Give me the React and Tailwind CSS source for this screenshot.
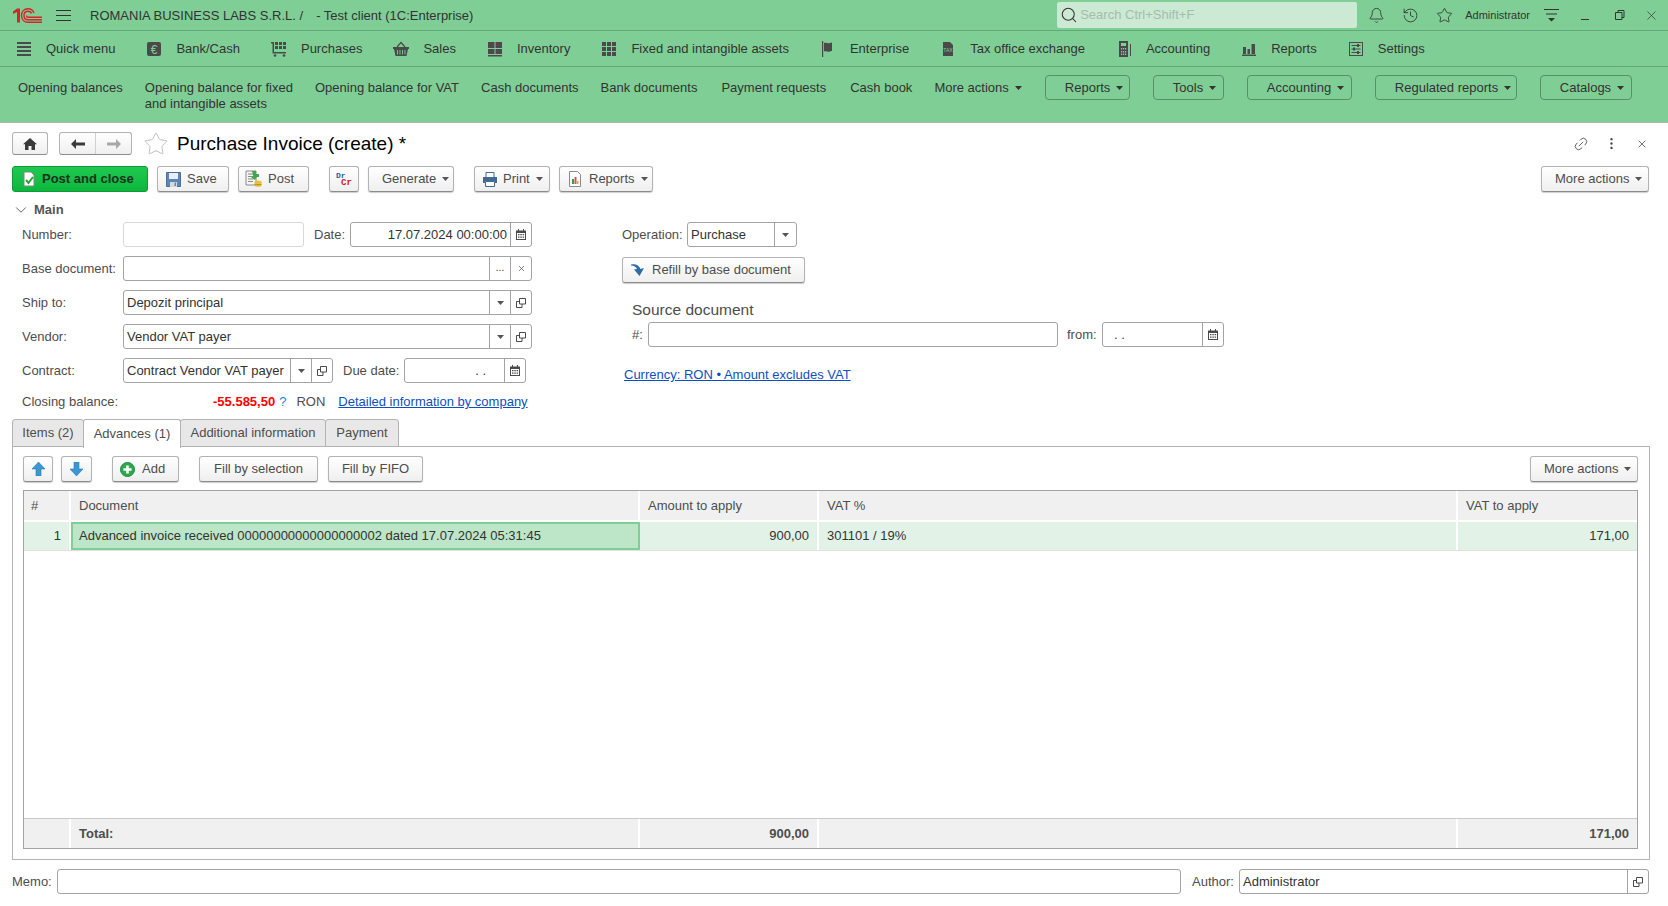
import React from "react";
import { Bell, History, Star, Search, X, Link2, MoreVertical, ChevronDown } from "lucide-react";

const Caret = ({ c = "#555" }) => (
  <svg width="7" height="4" viewBox="0 0 7 4" className="shrink-0"><path d="M0 0h7L3.5 4z" fill={c} /></svg>
);

const Logo = () => (
  <svg width="29" height="15" viewBox="0 0 29 15" fill="none" stroke="#d8232a" strokeWidth="1.4">
    <path d="M0 3.500L4 .5h3v14H4V4L0 6z" fill="#d8232a" stroke="none" />
    <path d="M21 5C20 2 17.500.7 15 .7 11 .7 8.500 3.700 8.500 7.500S11 14.300 15 14.300h14" />
    <path d="M18.500 5.500C18 4 16.500 3.300 15 3.300c-2.500 0-4 1.900-4 4.200s1.500 4.300 4 4.300h14" />
    <path d="M13.500 7.500c0 1 .7 1.800 1.700 1.800H29" />
  </svg>
);

const I = ({ children }) => (
  <svg width="16" height="16" viewBox="0 0 16 16" className="shrink-0" fill="#4a4a4a">{children}</svg>
);

const IQuick = () => <I><path d="M1 1h14v2H1zM1 5h14v2H1zM1 9h14v2H1zM1 13h14v2H1z" /></I>;
const IBank = () => (
  <I>
    <rect x="1" y="1" width="14" height="14" rx="2" />
    <text x="8" y="12.500" textAnchor="middle" fontSize="12" fill="#7fce95" fontFamily="Liberation Sans">€</text>
  </I>
);
const ICart = () => (
  <I>
    <path d="M0 1h3v10h12v1.500H1.500V2.500H0z" />
    <path d="M4 1h3v3H4zM8 1h3v3H8zM12 1h3v3h-3zM4 5h3v3H4zM8 5h3v3H8zM12 5h3v3h-3z" />
    <circle cx="4" cy="14.500" r="1.300" /><circle cx="13" cy="14.500" r="1.300" />
  </I>
);
const IBasket = () => (
  <I>
    <path d="M0 6h16v2h-1l-1.500 7h-11L1 8H0z" />
    <path d="M4 6l4-4.500L12 6" fill="none" stroke="#4a4a4a" strokeWidth="1.200" />
    <path d="M4.500 9v4.500M7 9v4.500M9.500 9v4.500M12 9v4.500" stroke="#7fce95" strokeWidth="0.900" />
  </I>
);
const IInv = () => <I><path d="M1 1h6.500v6H1zM8.500 1H15v6H8.500zM1 8h6.500v5H1zM8.500 8H15v5H8.500zM1 14h14v1.500H1z" /></I>;
const IGrid = () => <I><path d="M1 1h4v4H1zM6 1h4v4H6zM11 1h4v4h-4zM1 6h4v4H1zM6 6h4v4H6zM11 6h4v4h-4zM1 11h4v4H1zM6 11h4v4H6zM11 11h4v4h-4z" /></I>;
const IFlag = () => <I><path d="M2 0h1.200v16H2zM4 2c2-1 3 .5 5 .2s2.500-1 3-.7V10c-1-.3-2 .7-4 .7S5 10 4 10.500z" /></I>;
const ITax = () => (
  <I>
    <path d="M3 1h7l3 3v11H3z" />
    <text x="8" y="11" textAnchor="middle" fontSize="5" fill="#7fce95" fontFamily="Liberation Sans">TAX</text>
  </I>
);
const ICalc = () => (
  <I>
    <path fillRule="evenodd" d="M3 0h9v16H3zM5 2v3h5V2zM5 7v1.500h1.200V7zM7 7v1.500h1.200V7zM9 7v1.500h1.200V7zM5 10v1.500h1.200V10zM7 10v1.500h1.200V10zM9 10v1.500h1.200V10zM5 12.500V14h1.200v-1.500zM7 12.500V14h1.200v-1.500zM9 12.500V14h1.200v-1.500z" />
    <path d="M14 3h1v12h-1z" />
  </I>
);
const IBars = () => <I><path d="M2 6h3v7H2zM6.500 8h2.500v5H6.500zM10.500 3H14v10h-3.500zM1 13.500h14V15H1z" /></I>;
const ISet = () => (
  <I>
    <path fillRule="evenodd" d="M1 1h14v14H1zM2 2v12h12V2z" />
    <path d="M3.500 4h9v1h-9zM3.500 7.500h9v1h-9zM3.500 11h9v1h-9zM9 3h2v3H9zM5 6.500h2v3H5zM9 10h2v3H9z" />
  </I>
);

const menu = [
  [IQuick, "Quick menu"], [IBank, "Bank/Cash"], [ICart, "Purchases"], [IBasket, "Sales"], [IInv, "Inventory"],
  [IGrid, "Fixed and intangible assets"], [IFlag, "Enterprise"], [ITax, "Tax office exchange"], [ICalc, "Accounting"],
  [IBars, "Reports"], [ISet, "Settings"],
];

const Btn = ({ children, className = "" }) => (
  <div className={`flex h-[26px] shrink-0 items-center rounded-[3px] border border-[#b3b3b3] border-b-[#8c8c8c] bg-gradient-to-b from-white to-[#efefef] text-[#4d4d4d] shadow-[0_1px_1px_rgba(0,0,0,0.2)] ${className}`}>
    {children}
  </div>
);

const Label = ({ children, className = "" }) => <span className={`shrink-0 text-[#4d4d4d] ${className}`}>{children}</span>;

const Field = ({ className = "", children, light }) => (
  <div className={`flex h-[25px] shrink-0 items-center rounded-[3px] border bg-white text-[#333] ${light ? "border-[#d9d9d9]" : "border-[#a3a3a3]"} ${className}`}>
    {children}
  </div>
);

const Cell = ({ children }) => (
  <div className="flex h-full w-[21px] shrink-0 items-center justify-center border-l border-[#a3a3a3]">{children}</div>
);

const Cal = () => (
  <svg width="10" height="11" viewBox="0 0 10 11" fill="#4a4a4a">
    <path fillRule="evenodd" d="M0 1.500h2V0h1v1.500h4V0h1v1.500h2V11H0zM1 4v6h8V4z" />
    <path d="M2 5h1.500v1.300H2zM4.300 5h1.500v1.300H4.300zM6.600 5h1.500v1.300H6.600zM2 7.500h1.500v1.300H2zM4.300 7.500h1.500v1.300H4.300zM6.600 7.500h1.500v1.300H6.600z" />
  </svg>
);

const Open = () => (
  <svg width="10" height="10" viewBox="0 0 10 10" fill="none" stroke="#4a4a4a">
    <path d="M3.500.5h6v5.500h-6zM3.500 3.500h-3v6h5.500V6" />
  </svg>
);

const CaretCell = () => <Cell><Caret /></Cell>;
const OpenCell = () => <Cell><Open /></Cell>;
const CalCell = () => <Cell><Cal /></Cell>;

const Doc = () => (
  <svg width="14" height="16" viewBox="0 0 14 16">
    <path d="M2 1h7l3 3v11H2z" fill="#fff" stroke="#7d8a80" />
    <path d="M4 9l2.500 3L11 6" fill="none" stroke="#1fa836" strokeWidth="2" />
  </svg>
);
const Floppy = () => (
  <svg width="15" height="15" viewBox="0 0 15 15">
    <path d="M.5.5h14v14H.5z" fill="#5b87b3" stroke="#4a6f96" />
    <path d="M3 1h9v6H3z" fill="#e8eef4" />
    <path d="M4 10h7v5H4z" fill="#d6d9dc" /><path d="M8.500 10.500h1.500v3.500H8.500z" fill="#5b87b3" />
  </svg>
);
const PostI = () => (
  <svg width="18" height="18" viewBox="0 0 18 18">
    <path d="M1 1h10v14H1z" fill="#f5f5f5" stroke="#8a8a8a" />
    <path d="M3 4h6M3 6.500h6M3 9h5M3 11.500h5" stroke="#8a8a8a" />
    <path d="M7 1h4v3h3v3h-2l-2.500 3L6 7h2.500z" fill="#3fa84b" />
    <ellipse cx="13" cy="12" rx="3.500" ry="1.500" fill="#e7c23c" /><path d="M9.500 12v4c0 1 7 1 7 0v-4" fill="#e7c23c" />
    <path d="M9.500 14c0 1 7 1 7 0" fill="none" stroke="#a98a1e" />
  </svg>
);
const DrCr = () => (
  <svg width="16" height="16" viewBox="0 0 16 16" fontFamily="Liberation Mono" fontWeight="700" fontSize="8">
    <text x="0" y="7" fill="#2c5f9e">Dr</text><text x="5" y="14" fill="#d02020" fontSize="9">Cr</text>
  </svg>
);
const Printer = () => (
  <svg width="16" height="15" viewBox="0 0 16 15">
    <path d="M4 .5h8v5H4z" fill="#fff" stroke="#3d6a96" />
    <path d="M1 5h14v6h-2V9H3v2H1z" fill="#3d6a96" />
    <path d="M3.500 9.500h9v5h-9z" fill="#fff" stroke="#3d6a96" />
  </svg>
);
const RepI = () => (
  <svg width="14" height="16" viewBox="0 0 14 16">
    <path d="M1.500.5h8l3 3v12h-11z" fill="#fff" stroke="#8a8a8a" />
    <path d="M4 8h2v5H4z" fill="#2f9e44" /><path d="M6.500 6h2v7h-2z" fill="#d9534f" /><path d="M9 10h1.500v3H9z" fill="#e7a33c" />
  </svg>
);
const ArrowBig = ({ down }) => (
  <svg width="13" height="14" viewBox="0 0 13 14" className={down ? "rotate-180" : ""}>
    <path d="M6.500 0L13 7H9v7H4V7H0z" fill="#3b97d3" stroke="#2a7ab0" strokeWidth=".6" />
  </svg>
);
const Plus = () => (
  <svg width="15" height="15" viewBox="0 0 15 15">
    <circle cx="7.500" cy="7.500" r="7" fill="#2fa84f" stroke="#1f8a3c" />
    <path d="M6.200 3.500h2.600v2.700h2.700v2.600H8.800v2.700H6.200V8.800H3.500V6.200h2.700z" fill="#fff" />
  </svg>
);
const Refill = () => (
  <svg width="14" height="14" viewBox="0 0 14 14">
    <path d="M0 1.500C4 .5 8 1.500 9.500 6L13 5 8.500 13 3 6.500 6 6C5 4 3 2.500 0 2.500z" fill="#2e6da4" />
  </svg>
);
const Home = () => (
  <svg width="14" height="12" viewBox="0 0 14 12"><path d="M7 0l7 6.300h-2V12H8.500V8h-3v4H2V6.300H0z" fill="#3a3a3a" /></svg>
);
const Arrow = ({ c, right }) => (
  <svg width="14" height="10" viewBox="0 0 14 10" className={right ? "rotate-180" : ""}><path d="M0 5l5-5v3.500h9v3H5V10z" fill={c} /></svg>
);

export default function App() {
  return (
    <div className="flex h-[906px] w-[1668px] flex-col overflow-hidden whitespace-nowrap bg-white font-['Liberation_Sans',Arial,sans-serif] text-[13px] leading-[16px] text-[#333]">
      {/* top bars */}
      <div className="h-[123px] shrink-0 border-b border-[#a9b8ad] bg-[#7fce95] text-[#333]">
        <div className="flex h-[31px] items-center border-b border-[#5fa877] pl-[13px]">
          <Logo />
          <div className="ml-[14px] flex h-[11px] w-[15px] flex-col justify-between">
            <div className="h-px bg-[#333]" /><div className="h-px bg-[#333]" /><div className="h-px bg-[#333]" />
          </div>
          <span className="ml-[19px] mt-[1px]">ROMANIA BUSINESS LABS S.R.L. /</span>
          <span className="ml-[13px] mt-[1px]">- Test client (1C:Enterprise)</span>
          <div className="ml-auto flex h-[26px] w-[300px] items-center rounded-[2px] bg-[#cbe9d3] pl-[3px] text-[#a5bdac]">
            <Search size={18} strokeWidth={1.4} className="text-[#333]" />
            <span className="ml-[2px]">Search Ctrl+Shift+F</span>
          </div>
          <Bell size={17} strokeWidth={1.2} className="ml-[11px]" />
          <History size={17} strokeWidth={1.2} className="ml-[17px]" />
          <Star size={17} strokeWidth={1.2} className="ml-[17px]" />
          <span className="ml-[12px] text-[11px]">Administrator</span>
          <svg width="15" height="14" viewBox="0 0 15 14" className="ml-[14px]" fill="#333">
            <path d="M0 1h15v1H0zM2 5.500h11v1H2zM4 10h7L7.500 13.500z" />
          </svg>
          <div className="ml-[22px] mt-[8px] h-px w-[8px] bg-[#333]" />
          <svg width="10" height="10" viewBox="0 0 10 10" className="ml-[26px]" fill="none" stroke="#333">
            <path d="M3 2.500V.5h6v7H7M.5 2.500h6.500v7H.5z" />
          </svg>
          <X size={15} strokeWidth={1.1} className="ml-[19px] mr-[9px]" />
        </div>
        <div className="flex h-[36px] items-center gap-[31px] border-b border-[#5fa877] pl-[16px]">
          {menu.map(([Ic, t]) => (
            <div key={t} className="flex items-center">
              <Ic />
              <span className="ml-[14px] mt-[1px]">{t}</span>
            </div>
          ))}
        </div>
        <div className="flex items-start gap-[22px] pl-[18px] pt-[8px]">
          <span className="mt-[5px] leading-[16px]">Opening balances</span>
          <span className="mt-[5px] leading-[16px]">Opening balance for fixed<br />and intangible assets</span>
          <span className="mt-[5px]">Opening balance for VAT</span>
          <span className="mt-[5px]">Cash documents</span>
          <span className="mt-[5px]">Bank documents</span>
          <span className="ml-[2px] mt-[5px]">Payment requests</span>
          <span className="ml-[2px] mt-[5px]">Cash book</span>
          <span className="mt-[5px] flex items-center gap-[6px]">More actions <Caret c="#333" /></span>
          {[["Reports", "w-[85px] ml-[1px]"], ["Tools", "w-[71px] ml-[1px]"], ["Accounting", "w-[105px] ml-[1px]"], ["Regulated reports", "w-[142px] ml-[1px]"], ["Catalogs", "w-[92px] ml-[1px]"]].map(([t, w]) => (
            <div key={t} className={`flex h-[25px] items-center gap-[6px] rounded-[4px] border border-[#5b8f6b] pl-[19px] ${w}`}>
              {t} <Caret c="#333" />
            </div>
          ))}
        </div>
      </div>

      {/* form */}
      <div className="flex flex-1 flex-col px-[12px]">
        <div className="mt-[9px] flex h-[23px] shrink-0 items-center">
          <div className="flex h-[23px] w-[36px] items-center justify-center rounded-[3px] border border-[#b3b3b3] border-b-[#8c8c8c] bg-gradient-to-b from-white to-[#efefef]"><Home /></div>
          <div className="ml-[11px] flex h-[23px] w-[73px] rounded-[3px] border border-[#b3b3b3] border-b-[#8c8c8c] bg-gradient-to-b from-white to-[#efefef]">
            <div className="flex flex-1 items-center justify-center border-r border-[#d0d0d0]"><Arrow c="#3a3a3a" /></div>
            <div className="flex flex-1 items-center justify-center"><Arrow c="#a8a8a8" right /></div>
          </div>
          <Star size={26} strokeWidth={0.7} className="ml-[11px] text-[#a9a9a9]" />
          <span className="ml-[8px] text-[19px] leading-[23px] text-black">Purchase Invoice (create) *</span>
          <Link2 size={16} strokeWidth={1.3} className="ml-auto mr-[15px] -rotate-45 text-[#555]" />
          <MoreVertical size={15} strokeWidth={1.8} className="mr-[17px] text-[#444]" />
          <X size={12} strokeWidth={1.5} className="mr-[8px] text-[#444]" />
        </div>

        {/* toolbar */}
        <div className="mt-[11px] flex shrink-0 items-center">
          <div className="flex h-[26px] w-[136px] items-center rounded-[3px] border border-[#0e9a35] bg-gradient-to-b from-[#1fc94f] to-[#0cb63c] pl-[9px] font-bold text-[#15331f]">
            <Doc /><span className="ml-[6px]">Post and close</span>
          </div>
          <Btn className="ml-[9px] w-[72px] pl-[8px]"><Floppy /><span className="ml-[6px]">Save</span></Btn>
          <Btn className="ml-[9px] w-[71px] pl-[6px]"><PostI /><span className="ml-[5px]">Post</span></Btn>
          <Btn className="ml-[20px] w-[30px] pl-[6px]"><DrCr /></Btn>
          <Btn className="ml-[9px] w-[86px] gap-[6px] pl-[13px]">Generate <Caret /></Btn>
          <Btn className="ml-[20px] w-[76px] pl-[7px]"><Printer /><span className="ml-[5px]">Print</span><span className="ml-[6px]"><Caret /></span></Btn>
          <Btn className="ml-[9px] w-[94px] pl-[8px]"><RepI /><span className="ml-[7px]">Reports</span><span className="ml-[6px]"><Caret /></span></Btn>
          <Btn className="ml-auto mr-[7px] w-[108px] gap-[6px] pl-[13px]">More actions <Caret /></Btn>
        </div>

        {/* main group */}
        <div className="mt-[10px] flex h-[16px] shrink-0 items-center font-bold text-[#555]">
          <ChevronDown size={18} strokeWidth={1.2} />
          <span className="ml-[4px]">Main</span>
        </div>

        <div className="mt-[4px] flex shrink-0">
          <div className="w-[610px] shrink-0 pl-[10px]">
            <div className="flex h-[25px] items-center">
              <Label className="w-[101px]">Number:</Label>
              <Field light className="w-[181px]" />
              <Label className="ml-[10px] w-[36px]">Date:</Label>
              <Field className="w-[182px]">
                <span className="flex-1 pr-[3px] text-right">17.07.2024 00:00:00</span>
                <CalCell />
              </Field>
            </div>
            <div className="mt-[9px] flex h-[25px] items-center">
              <Label className="w-[101px]">Base document:</Label>
              <Field className="w-[409px]">
                <span className="flex-1" />
                <Cell><span className="-mt-[2px] text-[10px]">...</span></Cell>
                <Cell><X size={9} strokeWidth={1.6} /></Cell>
              </Field>
            </div>
            <div className="mt-[9px] flex h-[25px] items-center">
              <Label className="w-[101px]">Ship to:</Label>
              <Field className="w-[409px]">
                <span className="flex-1 pl-[3px]">Depozit principal</span>
                <CaretCell /><OpenCell />
              </Field>
            </div>
            <div className="mt-[9px] flex h-[25px] items-center">
              <Label className="w-[101px]">Vendor:</Label>
              <Field className="w-[409px]">
                <span className="flex-1 pl-[3px]">Vendor VAT payer</span>
                <CaretCell /><OpenCell />
              </Field>
            </div>
            <div className="mt-[9px] flex h-[25px] items-center">
              <Label className="w-[101px]">Contract:</Label>
              <Field className="w-[210px]">
                <span className="flex-1 pl-[3px]">Contract Vendor VAT payer</span>
                <CaretCell /><OpenCell />
              </Field>
              <Label className="ml-[10px] w-[61px]">Due date:</Label>
              <Field className="w-[122px]">
                <span className="flex-1 pr-[18px] text-right">. .</span>
                <CalCell />
              </Field>
            </div>
            <div className="mt-[11px] flex h-[16px] items-center">
              <Label className="w-[191px]">Closing balance:</Label>
              <span className="font-bold text-[#ff0000]">-55.585,50</span>
              <span className="ml-[4px] text-[#1b86c9]">?</span>
              <span className="ml-[10px] text-[#4d4d4d]">RON</span>
              <span className="ml-[13px] text-[#0d4fc0] underline">Detailed information by company</span>
            </div>
          </div>

          <div className="flex-1">
            <div className="flex h-[25px] items-center">
              <Label className="w-[65px]">Operation:</Label>
              <Field className="w-[110px]">
                <span className="flex-1 pl-[3px]">Purchase</span>
                <div className="flex h-full w-[22px] items-center justify-center border-l border-[#a3a3a3]"><Caret /></div>
              </Field>
            </div>
            <Btn className="mt-[10px] w-[183px] pl-[8px]"><Refill /><span className="ml-[7px]">Refill by base document</span></Btn>
            <div className="ml-[10px] mt-[18px] text-[15.5px] leading-[18px] text-[#4d4d4d]">Source document</div>
            <div className="ml-[10px] mt-[3px] flex h-[25px] items-center">
              <Label className="w-[16px]">#:</Label>
              <Field className="w-[410px]" />
              <Label className="ml-[9px] w-[35px]">from:</Label>
              <Field className="w-[122px]">
                <span className="flex-1 pl-[11px]">. .</span>
                <CalCell />
              </Field>
            </div>
            <div className="ml-[2px] mt-[20px] text-[#0d4fc0] underline">Currency: RON • Amount excludes VAT</div>
          </div>
        </div>

        {/* tabs */}
        <div className="relative z-10 mt-[9px] flex h-[28px] shrink-0 text-[#4d4d4d]">
          <div className="flex w-[72px] items-center justify-center rounded-t-[3px] border border-[#b3b3b3] bg-[#e8e8e8]">Items (2)</div>
          <div className="-ml-px flex h-[29px] w-[98px] items-center justify-center rounded-t-[3px] border border-b-0 border-[#b3b3b3] bg-white">Advances (1)</div>
          <div className="-ml-px flex w-[146px] items-center justify-center rounded-t-[3px] border border-[#b3b3b3] bg-[#e8e8e8]">Additional information</div>
          <div className="-ml-px flex w-[74px] items-center justify-center rounded-t-[3px] border border-[#b3b3b3] bg-[#e8e8e8]">Payment</div>
        </div>

        <div className="-mt-px flex h-[414px] w-[1638px] shrink-0 flex-col border border-[#b3b3b3] pb-[10px] pl-[10px] pr-[11px] pt-[9px]">
          <div className="flex shrink-0 items-center">
            <Btn className="w-[30px] justify-center"><ArrowBig /></Btn>
            <Btn className="ml-[8px] w-[31px] justify-center"><ArrowBig down /></Btn>
            <Btn className="ml-[20px] w-[67px] pl-[7px]"><Plus /><span className="ml-[7px]">Add</span></Btn>
            <Btn className="ml-[20px] w-[119px] justify-center">Fill by selection</Btn>
            <Btn className="ml-[10px] w-[95px] justify-center">Fill by FIFO</Btn>
            <Btn className="ml-auto w-[108px] gap-[6px] pl-[13px]">More actions <Caret /></Btn>
          </div>
          <div className="mt-[8px] flex min-h-0 flex-1 flex-col border border-[#a3a3a3]">
            <div className="flex h-[31px] shrink-0 border-b-2 border-white bg-[#f0f0f0] text-[#4d4d4d]">
              <div className="flex w-[47px] items-center border-r-2 border-white pl-[7px]">#</div>
              <div className="flex w-[569px] items-center border-r-2 border-white pl-[8px]">Document</div>
              <div className="flex w-[179px] items-center border-r-2 border-white pl-[8px]">Amount to apply</div>
              <div className="flex w-[639px] items-center border-r-2 border-white pl-[8px]">VAT %</div>
              <div className="flex flex-1 items-center pl-[8px]">VAT to apply</div>
            </div>
            <div className="flex h-[28px] shrink-0 bg-[#e2f2e6] text-[#333]">
              <div className="flex w-[47px] items-center justify-end border-r-2 border-white pr-[8px]">1</div>
              <div className="flex w-[569px] items-center border-2 border-[#7fce95] bg-[#bde5c8] pl-[6px]">Advanced invoice received 00000000000000000002 dated 17.07.2024 05:31:45</div>
              <div className="flex w-[179px] items-center justify-end border-r-2 border-white pr-[8px]">900,00</div>
              <div className="flex w-[639px] items-center border-r-2 border-white pl-[8px]">301101 / 19%</div>
              <div className="flex flex-1 items-center justify-end pr-[8px]">171,00</div>
            </div>
            <div className="flex-1 border-t border-[#e0e0e0]" />
            <div className="flex h-[30px] shrink-0 border-t border-[#c8c8c8] bg-[#f0f0f0] font-bold text-[#4d4d4d]">
              <div className="w-[47px] border-r-2 border-white" />
              <div className="flex w-[569px] items-center border-r-2 border-white pl-[8px]">Total:</div>
              <div className="flex w-[179px] items-center justify-end border-r-2 border-white pr-[8px]">900,00</div>
              <div className="w-[639px] border-r-2 border-white" />
              <div className="flex flex-1 items-center justify-end pr-[8px]">171,00</div>
            </div>
          </div>
        </div>

        {/* memo */}
        <div className="mt-[9px] flex h-[25px] shrink-0 items-center">
          <Label className="w-[45px]">Memo:</Label>
          <Field className="w-[1124px]" />
          <Label className="ml-[11px] w-[47px]">Author:</Label>
          <Field className="w-[410px]">
            <span className="flex-1 pl-[3px]">Administrator</span>
            <OpenCell />
          </Field>
        </div>
      </div>
    </div>
  );
}
